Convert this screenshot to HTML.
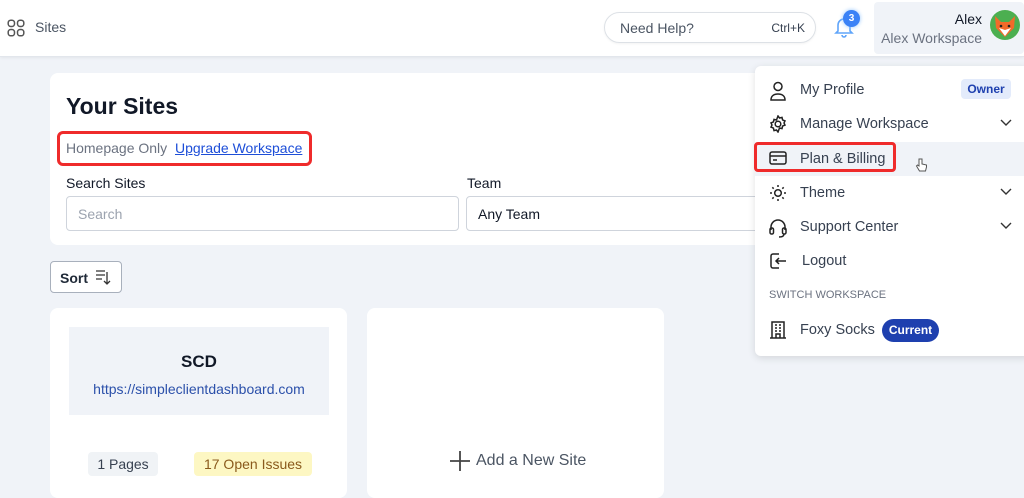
<!DOCTYPE html>
<html><head><style>
*{box-sizing:border-box;margin:0;padding:0}
body{width:1024px;height:486px;overflow:hidden;background:#f0f3f8;font-family:"Liberation Sans",sans-serif;position:relative;color:#1f2937}
.a{position:absolute}
.hdr{left:0;top:0;width:1024px;height:57px;background:#fff;border-bottom:1px solid #e2e6ec;box-shadow:0 1px 3px rgba(0,0,0,.06)}
.card{background:#fff;border-radius:8px}
.inp{border:1px solid #cfd4dc;border-radius:4px;height:35px;font-size:14px;padding:9px 11px;background:#fff}
.mi{left:0;width:269px;height:34px;font-size:14.5px;color:#374151}
.mi span.t{position:absolute;left:45px;top:9px}
.mi svg.ic{position:absolute;left:14px;top:8px}
.chev{position:absolute;left:245px;top:12px}
</style></head><body>
<div class="a hdr">
 <svg class="a" style="left:7px;top:19px" width="18" height="18" viewBox="0 0 18 18" fill="none" stroke="#555" stroke-width="1.5"><rect x="1.2" y="1.2" width="6.3" height="6.3" rx="2.6"/><rect x="10.5" y="1.2" width="6.3" height="6.3" rx="2.6"/><rect x="1.2" y="10.5" width="6.3" height="6.3" rx="2.6"/><rect x="10.5" y="10.5" width="6.3" height="6.3" rx="2.6"/></svg>
 <div class="a" style="left:35px;top:19px;font-size:14px;color:#4b5563">Sites</div>
 <div class="a" style="left:604px;top:12px;width:212px;height:31px;border:1px solid #dde1e6;border-radius:16px;box-shadow:0 1px 2px rgba(0,0,0,.05)">
  <span class="a" style="left:15px;top:7px;font-size:14px;color:#4b5563">Need Help?</span>
  <span class="a" style="right:10px;top:8px;font-size:12px;color:#374151">Ctrl+K</span>
 </div>
 <svg class="a" style="left:834px;top:15px" width="20" height="24" viewBox="0 0 20 24" fill="none" stroke="#60a5fa" stroke-width="1.6"><path d="M4 16V10a6 6 0 0 1 12 0v6l2 2H2z"/><path d="M8 20a2 2 0 0 0 4 0"/></svg>
 <div class="a" style="left:843px;top:10px;width:17px;height:17px;border-radius:50%;background:#3b82f6;color:#fff;font-size:10px;font-weight:bold;text-align:center;line-height:17px;box-shadow:0 0 4px #93c5fd">3</div>
 <div class="a" style="left:874px;top:2px;width:150px;height:52px;background:#f0f3f8;border-radius:4px">
  <div class="a" style="right:42px;top:9px;font-size:14px;color:#111827">Alex</div>
  <div class="a" style="right:42px;top:28px;font-size:14px;color:#6b7280">Alex Workspace</div>
  <svg class="a" style="left:116px;top:8px" width="30" height="30" viewBox="0 0 30 30"><circle cx="15" cy="15" r="15" fill="#4caf50"/><path d="M5 6l6 6h8l6-6-1 12-9 9-9-9z" fill="#f26b2a"/><path d="M9 18l6 8 6-8-6 2z" fill="#fff"/><circle cx="11" cy="16" r="1.3" fill="#222"/><circle cx="19" cy="16" r="1.3" fill="#222"/></svg>
 </div>
</div>
<div class="a card" style="left:50px;top:73px;width:720px;height:172px">
 <div class="a" style="left:16px;top:20px;font-size:23px;font-weight:bold;color:#111827">Your Sites</div>
 <div class="a" style="left:7px;top:58px;width:255px;height:35px;border:3px solid #ef2b2b;border-radius:6px"></div>
 <div class="a" style="left:16px;top:67px;font-size:14px;color:#6b7280">Homepage Only</div>
 <div class="a" style="left:125px;top:67px;font-size:14px;color:#1d4ed8;text-decoration:underline">Upgrade Workspace</div>
 <div class="a" style="left:16px;top:102px;font-size:14px;color:#111827">Search Sites</div>
 <div class="a inp" style="left:16px;top:123px;width:393px;color:#9ca3af">Search</div>
 <div class="a" style="left:417px;top:102px;font-size:14px;color:#111827">Team</div>
 <div class="a inp" style="left:416px;top:123px;width:300px;color:#111827">Any Team</div>
</div>
<div class="a" style="left:50px;top:261px;width:72px;height:32px;background:#fff;border:1px solid #a8b0bc;border-radius:4px">
 <span class="a" style="left:9px;top:8px;font-size:14px;font-weight:bold;color:#1f2937">Sort</span>
 <svg class="a" style="left:44px;top:7px" width="16" height="17" viewBox="0 0 16 17" fill="none" stroke="#333" stroke-width="1.3"><path d="M1 2h9M1 6h9M1 10h6M12 3v12M9 12l3 3 3-3"/></svg>
</div>
<div class="a card" style="left:50px;top:308px;width:297px;height:190px">
 <div class="a" style="left:19px;top:19px;width:260px;height:88px;background:#f0f3f8"></div>
 <div class="a" style="left:19px;top:44px;width:260px;text-align:center;font-size:17px;font-weight:bold;color:#111827">SCD</div>
 <div class="a" style="left:19px;top:73px;width:260px;text-align:center;font-size:14px;color:#2b50aa">https://simpleclientdashboard.com</div>
 <div class="a" style="left:38px;top:144px;width:70px;height:24px;background:#f0f3f6;border-radius:4px;font-size:14px;text-align:center;line-height:24px;color:#374151">1 Pages</div>
 <div class="a" style="left:144px;top:144px;width:118px;height:24px;background:#fdf7c3;border-radius:4px;font-size:14px;text-align:center;line-height:24px;color:#8a5a1c">17 Open Issues</div>
</div>
<div class="a card" style="left:367px;top:308px;width:297px;height:190px">
 <svg class="a" style="left:82px;top:142px" width="22" height="22" viewBox="0 0 22 22" stroke="#444" stroke-width="1.8"><path d="M11 1v20M1 11h20"/></svg>
 <div class="a" style="left:109px;top:144px;font-size:16px;color:#4b5563">Add a New Site</div>
</div>
<div class="a" style="left:755px;top:66px;width:275px;height:290px;background:#fff;border-radius:6px;box-shadow:0 2px 8px rgba(0,0,0,.12)">
 <div class="a mi" style="top:7px"><svg class="ic" width="18" height="20" viewBox="0 0 18 20" fill="none" stroke="#222" stroke-width="1.5"><circle cx="9" cy="5.5" r="4"/><path d="M2 19c0-4 3-6 7-6s7 2 7 6z"/></svg><span class="t">My Profile</span>
  <span class="a" style="left:206px;top:6px;width:50px;height:20px;background:#e3ebfb;border-radius:4px;color:#1e40af;font-size:12px;font-weight:bold;text-align:center;line-height:20px">Owner</span></div>
 <div class="a mi" style="top:41px"><svg class="ic" width="18" height="18" viewBox="0 0 18 18" fill="none" stroke="#222" stroke-width="1.5"><circle cx="9" cy="9" r="2.8"/><path d="M9 1l1.5 2 2.5-.6.6 2.5 2.4 1-1 2.1 1 2.1-2.4 1-.6 2.5-2.5-.6L9 17l-1.5-2-2.5.6-.6-2.5-2.4-1 1-2.1-1-2.1 2.4-1 .6-2.5 2.5.6z"/></svg><span class="t">Manage Workspace</span><svg class="chev" width="12" height="8" viewBox="0 0 12 8" fill="none" stroke="#333" stroke-width="1.4"><path d="M1 1l5 5 5-5"/></svg></div>
 <div class="a mi" style="top:76px;background:#f0f3f8"><svg class="ic" width="18" height="16" viewBox="0 0 18 16" fill="none" stroke="#222" stroke-width="1.5"><rect x="1" y="2" width="16" height="12" rx="2"/><path d="M1 6h16M4 10h4"/></svg><span class="t">Plan &amp; Billing</span>
  <svg class="a" style="left:160px;top:16px" width="12" height="14" viewBox="0 0 12 14" fill="#fff" stroke="#555" stroke-width="1"><path d="M4 1v7L2.5 7 1.5 8l3 5h6l1-4V7L7 6V1z"/></svg></div>
 <div class="a" style="left:-1px;top:76px;width:142px;height:30px;border:3px solid #ef2b2b;border-radius:4px"></div>
 <div class="a mi" style="top:110px"><svg class="ic" width="18" height="18" viewBox="0 0 18 18" fill="none" stroke="#222" stroke-width="1.5"><circle cx="9" cy="9" r="3.3"/><path d="M9 1v2M9 15v2M1 9h2M15 9h2M3.3 3.3l1.4 1.4M13.3 13.3l1.4 1.4M3.3 14.7l1.4-1.4M13.3 4.7l1.4-1.4"/></svg><span class="t">Theme</span><svg class="chev" width="12" height="8" viewBox="0 0 12 8" fill="none" stroke="#333" stroke-width="1.4"><path d="M1 1l5 5 5-5"/></svg></div>
 <div class="a mi" style="top:144px"><svg class="ic" width="18" height="20" viewBox="0 0 18 20" fill="none" stroke="#222" stroke-width="1.5"><path d="M2 12V9a7 7 0 0 1 14 0v3"/><rect x="1" y="10" width="3.5" height="6" rx="1.5"/><rect x="13.5" y="10" width="3.5" height="6" rx="1.5"/><path d="M15 16c0 2-2 3-5 3"/></svg><span class="t">Support Center</span><svg class="chev" width="12" height="8" viewBox="0 0 12 8" fill="none" stroke="#333" stroke-width="1.4"><path d="M1 1l5 5 5-5"/></svg></div>
 <div class="a mi" style="top:178px"><svg class="ic" width="18" height="18" viewBox="0 0 18 18" fill="none" stroke="#222" stroke-width="1.5"><path d="M10 2H4a2 2 0 0 0-2 2v10a2 2 0 0 0 2 2h6M17 9H7M10 6l-3 3 3 3"/></svg><span class="t" style="left:47px">Logout</span></div>
 <div class="a" style="left:14px;top:223px;font-size:11px;color:#6b7280">SWITCH WORKSPACE</div>
 <div class="a mi" style="top:247px"><svg class="ic" width="18" height="18" viewBox="0 0 18 18" fill="none" stroke="#222" stroke-width="1.5"><path d="M3 1h12v16H3zM1 17h16M6 4h2M10 4h2M6 7h2M10 7h2M6 10h2M10 10h2M7 17v-4h4v4"/></svg><span class="t">Foxy Socks</span>
  <span class="a" style="left:127px;top:6px;width:57px;height:23px;background:#1e40af;border-radius:12px;color:#fff;font-size:12px;font-weight:bold;text-align:center;line-height:23px">Current</span></div>
</div>
</body></html>
